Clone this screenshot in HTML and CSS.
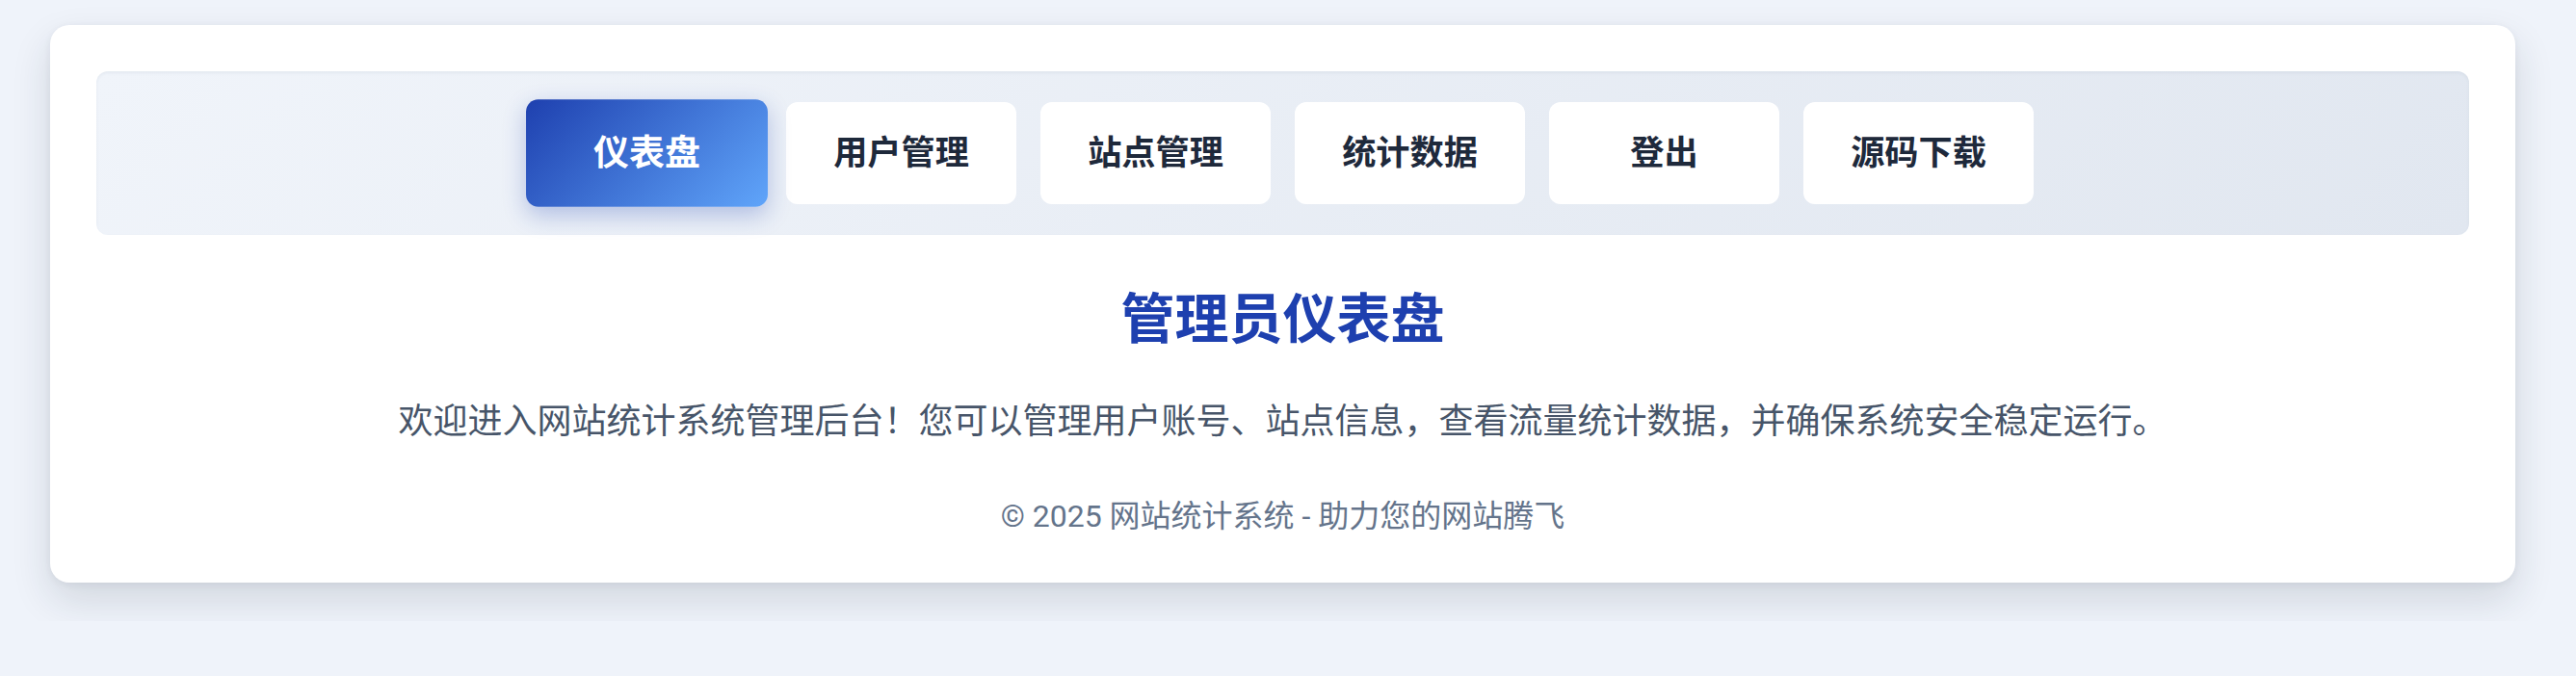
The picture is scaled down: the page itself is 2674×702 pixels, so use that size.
FILE: index.html
```html
<!DOCTYPE html>
<html lang="zh-CN">

<head>
  <meta charset="UTF-8">
  <meta name="viewport" content="width=device-width, initial-scale=1.0">
  <title>管理员仪表盘</title>
  <link rel="stylesheet" href="styles.css">
</head>

<body>
  <div class="page">
    <div class="card">
      <!-- top navigation -->
      <nav class="nav">
        <a class="nav-btn active" href="#">仪表盘</a>
        <a class="nav-btn" href="#">用户管理</a>
        <a class="nav-btn" href="#">站点管理</a>
        <a class="nav-btn" href="#">统计数据</a>
        <a class="nav-btn" href="#">登出</a>
        <a class="nav-btn" href="#">源码下载</a>
      </nav>

      <h1 class="title">管理员仪表盘</h1>
      <p class="intro">欢迎进入网站统计系统管理后台！您可以管理用户账号、站点信息，查看流量统计数据，并确保系统安全稳定运行。</p>

      <footer class="footer">© 2025 网站统计系统 - 助力您的网站腾飞</footer>
    </div>
  </div>
</body>

</html>
```

FILE: styles.css
```css
body {
  margin: 0;
  font-family: Roboto, "Noto Sans CJK SC", sans-serif;
  background-color: #eff3fa;
}

.page {
  padding: 26px 63px 40px 52px;
}

.card {
  background-color: #fff;
  border-radius: 20px;
  padding: 48px 48px 45px;
  box-shadow: 0 18px 40px rgba(30, 41, 59, 0.14), 0 2px 8px rgba(30, 41, 59, 0.06);
  text-align: center;
}

.nav {
  display: flex;
  justify-content: center;
  gap: 25px;
  padding: 32px;
  border-radius: 12px;
  background: linear-gradient(135deg, #f0f4fa 0%, #e1e7f0 100%);
  box-shadow: inset 0 2px 3px rgba(148, 163, 184, 0.12);
}

.nav-btn {
  box-sizing: border-box;
  width: 239px;
  padding: 27px 0;
  font-size: 35.2px;
  line-height: 52px;
  font-weight: 700;
  color: #1e293b;
  text-decoration: none;
  background-color: #fff;
  border-radius: 12px;
}

.nav-btn.active {
  color: #fff;
  background: linear-gradient(135deg, #1e40af 0%, #60a5fa 100%);
  box-shadow: 0 8px 22px rgba(30, 64, 175, 0.28);
  transform: scale(1.05);
}

.title {
  margin: 55px 0 0;
  font-size: 56px;
  line-height: 67px;
  font-weight: 700;
  color: #1e40af;
}

.intro {
  margin: 44px 0 0;
  font-size: 36px;
  line-height: 56px;
  color: #475569;
}

.footer {
  margin-top: 46px;
  font-size: 32px;
  line-height: 48px;
  color: #64748b;
}
```
